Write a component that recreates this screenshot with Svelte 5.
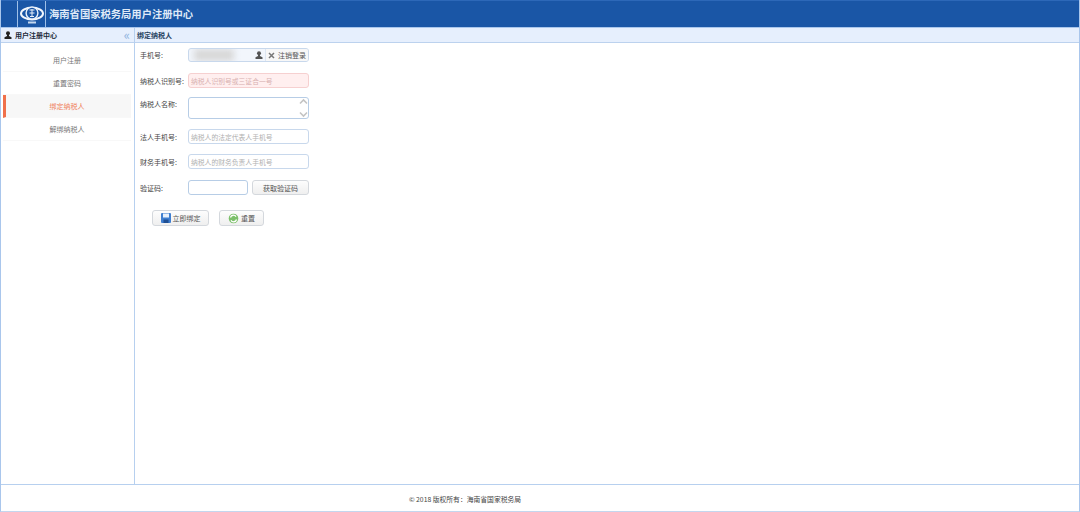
<script>
  const menu = [
    { label: '用户注册' },
    { label: '重置密码' },
    { label: '绑定纳税人', active: true },
    { label: '解绑纳税人' }
  ];
</script>

<div class="page">
  <header class="top">
    <div class="logo">
      <svg width="26" height="24" viewBox="0 0 26 24" aria-hidden="true">
        <ellipse cx="13" cy="11.5" rx="11" ry="6" fill="none" stroke="#f2f6fc" stroke-width="2" />
        <circle cx="13" cy="11" r="6.6" fill="#e8f0fa" />
        <circle cx="13" cy="11" r="5.2" fill="#1a56a6" />
        <path d="M10.500 8h5M13 7v7.500M10.500 11h5M11 14.500h4" stroke="#e8f0fa" stroke-width="1" fill="none" />
        <rect x="9" y="19.500" width="8" height="2" fill="#c4d7ef" />
      </svg>
    </div>
    <h1>海南省国家税务局用户注册中心</h1>
  </header>

  <div class="main">
    <aside class="side">
      <div class="bar side-bar">
        <span class="bar-title">
          <svg width="8" height="8" viewBox="0 0 8 8" aria-hidden="true">
            <circle cx="4" cy="2.3" r="2" fill="#222" />
            <path d="M3 4h2v1l2.500 1.200V8H.5V6.200L3 5z" fill="#222" />
          </svg>
          用户注册中心
        </span>
        <span class="collapse">«</span>
      </div>
      <nav class="menu">
        {#each menu as item}
          <div class="item" class:active={item.active}>{item.label}</div>
        {/each}
      </nav>
    </aside>

    <section class="content">
      <div class="bar content-bar">绑定纳税人</div>
      <form class="form">
        <div class="row r-phone">
          <span class="lbl">手机号:</span>
          <div class="field phone">
            <span class="masked"><i></i></span>
            <svg class="uicon" width="8" height="8" viewBox="0 0 8 8" aria-hidden="true">
              <circle cx="4" cy="2.300" r="2" fill="#555" />
              <path d="M3 4h2v1l2.500 1.200V8H.5V6.200L3 5z" fill="#555" />
            </svg>
            <span class="logout">
              <svg width="7" height="7" viewBox="0 0 7 7" aria-hidden="true">
                <path d="M1 1l5 5M6 1L1 6" stroke="#777" stroke-width="1.500" />
              </svg>
              注销登录
            </span>
          </div>
        </div>
        <div class="row r-id">
          <span class="lbl">纳税人识别号:</span>
          <div class="field err"><span class="ph err-ph">纳税人识别号或三证合一号</span></div>
        </div>
        <div class="row r-name">
          <span class="lbl">纳税人名称:</span>
          <div class="field area">
            <span class="spin">
              <svg width="9" height="20" viewBox="0 0 9 20" aria-hidden="true">
                <path d="M1 5.500L4.500 2 8 5.500M1 14.500L4.500 18 8 14.500" stroke="#c4c4c4" stroke-width="1.600" fill="none" />
              </svg>
            </span>
          </div>
        </div>
        <div class="row r-legal">
          <span class="lbl">法人手机号:</span>
          <div class="field"><span class="ph">纳税人的法定代表人手机号</span></div>
        </div>
        <div class="row r-fin">
          <span class="lbl">财务手机号:</span>
          <div class="field"><span class="ph">纳税人的财务负责人手机号</span></div>
        </div>
        <div class="row r-code">
          <span class="lbl">验证码:</span>
          <div class="field code"></div>
          <button type="button" class="btn get">获取验证码</button>
        </div>
        <div class="actions">
          <button type="button" class="btn act bind">
            <svg width="10" height="10" viewBox="0 0 10 10" aria-hidden="true">
              <rect x="0" y="0" width="10" height="10" rx="1" fill="#3f7fd0" />
              <rect x="2" y="0.500" width="6" height="4" fill="#e8f1fb" />
              <rect x="2.500" y="6.500" width="5" height="3.500" fill="#1f4f93" />
            </svg>
            立即绑定
          </button>
          <button type="button" class="btn act reset">
            <svg width="11" height="11" viewBox="0 0 11 11" aria-hidden="true">
              <circle cx="5.500" cy="5.500" r="4.800" fill="#7cc06a" />
              <path d="M2.500 4.500a3 3 0 0 1 5.500-.8M8.500 6.500a3 3 0 0 1-5.500.8" stroke="#fff" stroke-width="1.300" fill="none" />
            </svg>
            重置
          </button>
        </div>
      </form>
    </section>
  </div>

  <footer class="foot">© 2018 版权所有：海南省国家税务局</footer>
</div>

<style>
  :global(body) {
    margin: 0;
    background: #fff;
  }
  .page {
    width: 1080px;
    height: 512px;
    box-sizing: border-box;
    display: flex;
    flex-direction: column;
    font-family: "Noto Sans CJK SC", "Liberation Sans", sans-serif;
    font-size: 7px;
    line-height: 10px;
    color: #555;
    border-left: 1px solid #a9c6ec;
    border-right: 1px solid #a9c6ec;
    border-bottom: 1px solid #c4d6ee;
    overflow: hidden;
  }
  .top {
    flex: none;
    margin: 0 -1px;
    padding-left: 17px;
    display: flex;
    align-items: center;
    background: #1a56a6;
    border-top: 1px solid #2d68b8;
    border-bottom: 1px solid #a9c6ec;
    height: 26px;
  }
  .logo {
    width: 27px;
    height: 26px;
    flex: none;
    display: flex;
    align-items: center;
    justify-content: center;
    border-left: 1px solid #9fc0e8;
    border-right: 1px solid #9fc0e8;
  }
  h1 {
    margin: 0 0 0 3px;
    font-family: "Noto Sans CJK SC", serif;
    font-size: 10.3px;
    line-height: 14px;
    font-weight: 700;
    color: #dfe9f7;
  }
  .main {
    flex: 1;
    display: flex;
    min-height: 0;
  }
  .side {
    width: 133px;
    flex: none;
    border-right: 1px solid #b7d0ef;
  }
  .content {
    flex: 1;
    min-width: 0;
  }
  .bar {
    height: 14px;
    display: flex;
    align-items: center;
    background: #e6effd;
    border-bottom: 1px solid #bcd2ee;
    font-weight: 700;
    color: #25415f;
  }
  .side-bar {
    justify-content: space-between;
    padding: 0 4px 0 3px;
    color: #1c2a3a;
  }
  .bar-title {
    display: flex;
    align-items: center;
    gap: 3px;
  }
  .collapse {
    font-size: 13px;
    font-weight: 400;
    color: #8fb3de;
    line-height: 10px;
  }
  .content-bar {
    padding-left: 2px;
  }
  .menu {
    padding-top: 6px;
  }
  .item {
    margin: 0 3px 0 2px;
    display: flex;
    align-items: center;
    justify-content: center;
    border-bottom: 1px solid #f8f8f8;
    height: 22px;
    color: #777;
  }
  .item.active {
    background: #f7f7f7;
    color: #f0805a;
    border-left: 3px solid #f0704a;
    padding-right: 3px;
  }
  .form {
    padding: 5px 0 0 5px;
    width: 169px;
  }
  .row {
    display: flex;
    align-items: center;
  }
  .lbl {
    width: 48px;
    flex: none;
    white-space: nowrap;
    color: #444;
  }
  .field {
    flex: 1;
    height: 100%;
    box-sizing: border-box;
    border: 1px solid #c8d8ec;
    border-radius: 3px;
    display: flex;
    align-items: center;
    background: #fff;
    min-width: 0;
  }
  .r-phone { height: 14px; }
  .r-id { height: 15px; margin-top: 11px; }
  .r-name { height: 22px; margin-top: 9px; align-items: flex-start; }
  .r-name .lbl { margin-top: 2px; }
  .r-legal { height: 15px; margin-top: 10px; }
  .r-fin { height: 15px; margin-top: 10px; }
  .r-code { height: 15px; margin-top: 11px; }
  .phone {
    background: #f2f6fc;
    position: relative;
    justify-content: flex-end;
    overflow: hidden;
  }
  .masked {
    position: absolute;
    left: 0;
    top: 0;
    bottom: 0;
    width: 66px;
  }
  .masked i {
    display: block;
    height: 100%;
    width: 40px;
    margin-left: 5px;
    background: #d8d8d8;
    filter: blur(3px);
  }
  .uicon {
    position: relative;
    margin-right: 2px;
  }
  .logout {
    position: relative;
    display: flex;
    align-items: center;
    gap: 3px;
    height: 100%;
    padding: 0 2px;
    background: #f7f7f7;
    border-left: 1px solid #dde6f2;
    color: #555;
  }
  .ph {
    padding-left: 2px;
    font-size: 6.800px;
    color: #b0b0b0;
  }
  .err {
    background: #ffefef;
    border-color: #f6d0d0;
  }
  .err-ph {
    color: #d8b0b0;
  }
  .area {
    justify-content: flex-end;
    border-color: #b7cde6;
  }
  .spin {
    display: flex;
  }
  .code {
    flex: none;
    width: 60px;
    border-color: #b7cde6;
  }
  .btn {
    font: inherit;
    color: #555;
    border: 1px solid #d4d8dd;
    border-radius: 3px;
    background: linear-gradient(#fdfdfd, #efefef);
    padding: 0;
    display: flex;
    align-items: center;
    justify-content: center;
  }
  .get {
    width: 57px;
    height: 15px;
    margin-left: 4px;
    flex: none;
  }
  .actions {
    display: flex;
    gap: 10px;
    margin: 15px 0 0 12px;
  }
  .act {
    height: 16px;
    gap: 2px;
  }
  .bind { width: 57px; }
  .reset { width: 45px; }
  .foot {
    height: 27px;
    flex: none;
    box-sizing: border-box;
    border-top: 1px solid #b7d0ef;
    display: flex;
    align-items: center;
    justify-content: center;
    font-size: 6.800px;
    color: #444;
    padding: 1px 150px 0 0;
  }
</style>
